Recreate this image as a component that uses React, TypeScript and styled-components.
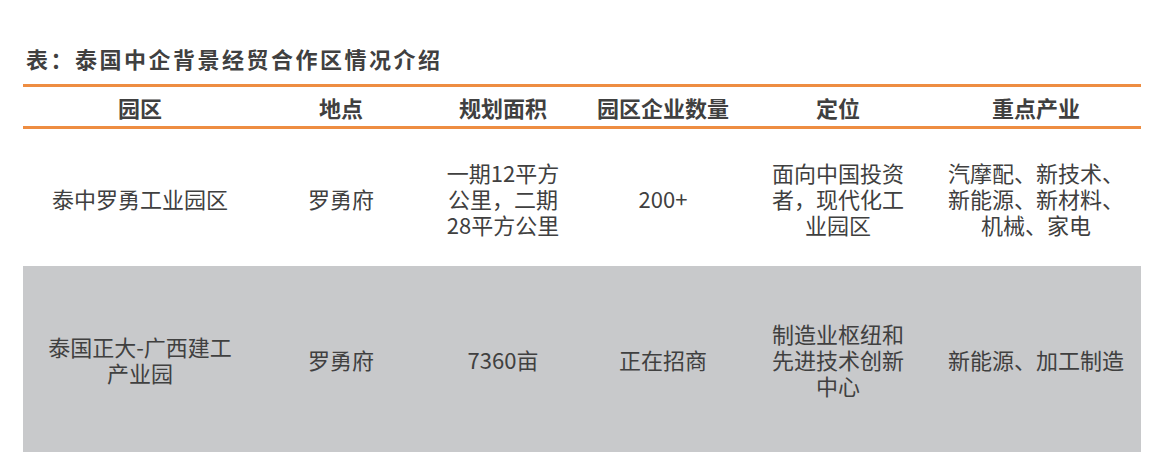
import React from "react";
import styled, { createGlobalStyle } from "styled-components";

const GlobalStyle = createGlobalStyle`
  html, body { margin: 0; padding: 0; background: #ffffff; }
  body { font-family: "Noto Sans CJK SC", "Noto Sans", sans-serif; color: #404040; }
`;

const Page = styled.div`
  width: 1156px;
  height: 466px;
  box-sizing: border-box;
  padding: 44px 15px 0 23px;
  overflow: hidden;
`;

const Title = styled.h1`
  margin: 0 0 12px 3px;
  font-size: 22px;
  line-height: 28px;
  font-weight: 700;
  letter-spacing: 2.5px;
  color: #404040;
`;

const Grid = styled.div`
  display: grid;
  grid-template-columns: 234px 168px 156px 164px 186px 1fr;
`;

const HeaderRow = styled.div`
  display: contents;
`;

const HeadCell = styled.div`
  height: 39px;
  border-top: 3px solid #ee8d41;
  border-bottom: 3px solid #ee8d41;
  display: flex;
  align-items: center;
  justify-content: center;
  font-size: 22px;
  font-weight: 700;
  color: #404040;
`;

const Cell = styled.div<{ $shade: boolean; $h: number }>`
  height: ${(p) => p.$h}px;
  background: ${(p) => (p.$shade ? "#c8c9cb" : "#ffffff")};
  display: flex;
  flex-direction: column;
  align-items: center;
  justify-content: center;
  font-size: 22px;
  line-height: 26px;
  color: #404040;
  text-align: center;
`;

const Line = styled.span`
  display: block;
  white-space: nowrap;
`;

const headers = ["园区", "地点", "规划面积", "园区企业数量", "定位", "重点产业"];

const rows: { h: number; shade: boolean; cells: string[][] }[] = [
  {
    h: 137,
    shade: false,
    cells: [
      ["泰中罗勇工业园区"],
      ["罗勇府"],
      ["一期12平方", "公里，二期", "28平方公里"],
      ["200+"],
      ["面向中国投资", "者，现代化工", "业园区"],
      ["汽摩配、新技术、", "新能源、新材料、", "机械、家电"],
    ],
  },
  {
    h: 186,
    shade: true,
    cells: [
      ["泰国正大-广西建工", "产业园"],
      ["罗勇府"],
      ["7360亩"],
      ["正在招商"],
      ["制造业枢纽和", "先进技术创新", "中心"],
      ["新能源、加工制造"],
    ],
  },
];

export default function App() {
  return (
    <>
      <GlobalStyle />
      <Page>
        <Title>表：泰国中企背景经贸合作区情况介绍</Title>
        <Grid>
          <HeaderRow>
            {headers.map((h) => (
              <HeadCell key={h}>{h}</HeadCell>
            ))}
          </HeaderRow>
          {rows.map((r, i) =>
            r.cells.map((c, j) => (
              <Cell key={`${i}-${j}`} $shade={r.shade} $h={r.h}>
                {c.map((l, k) => (
                  <Line key={k}>{l}</Line>
                ))}
              </Cell>
            ))
          )}
        </Grid>
      </Page>
    </>
  );
}
